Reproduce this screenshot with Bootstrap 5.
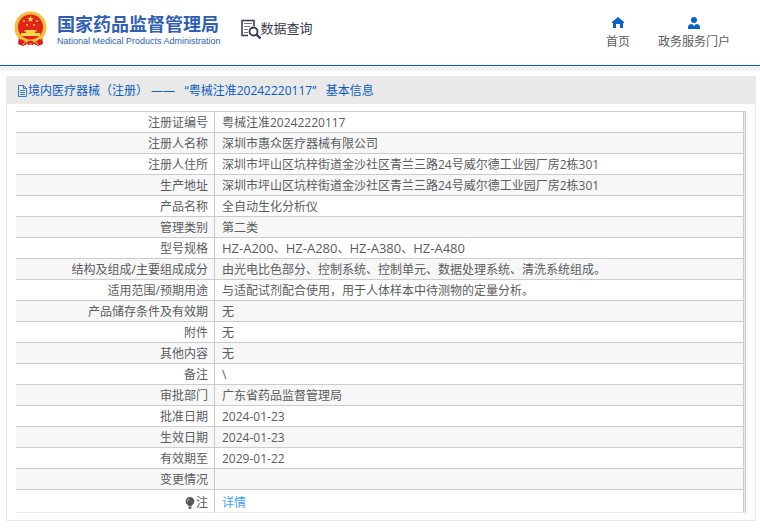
<!DOCTYPE html>
<html lang="zh-CN">
<head>
<meta charset="utf-8">
<meta name="viewport" content="width=device-width, initial-scale=1">
<title>国家药品监督管理局 数据查询</title>
<link href="https://cdn.jsdelivr.net/npm/bootstrap@5.3.0/dist/css/bootstrap.min.css" rel="stylesheet">
<style>
  body { font-family: "Open Sans", "Noto Sans CJK SC", sans-serif; font-size: 12px; line-height: 20px; color: #5a5c60; background: #fff; }
  .site-header { height: 66px; border-bottom: 1px solid #0b5fb8; }
  .hatch { height: 4px; background: linear-gradient(135deg, #e8e8e8 25%, #fff 25% 50%, #e8e8e8 50% 75%, #fff 75%) 0 0 / 4px 4px; }
  .brand { color: #2f5fb3; padding-left: 14px; gap: 10px; }
  .brand-cn { font-family: "Noto Sans CJK SC", sans-serif; font-size: 18px; line-height: 24px; font-weight: 700; }
  .brand-en { font-family: "Liberation Sans", sans-serif; font-size: 9px; line-height: 12px; }
  .query { font-family: "Noto Sans CJK SC", sans-serif; font-size: 13px; line-height: 20px; color: #3a3c46; margin-left: 20px; padding-bottom: 10px; }
  .query svg { margin-top: 4px; }
  .site-nav { gap: 28px; padding: 4px 30px 0 0; }
  .site-nav a { color: #5a5c60; }
  .site-nav svg { margin-bottom: 3px; }
  .panel { margin: 6px 4px 0 6px; border: 1px solid #e9e9e9; }
  .panel-title { background: #e9e9e9; color: #0a5cc0; font-size: 12px; line-height: 27px; padding-left: 10px; }
  .panel-body { padding: 7px 9px; }
  .frame { border: 1px solid #ccc; border-left: 0; border-bottom: 0; padding-right: 1px; background: #e9eaf3; }
  .detail { color: inherit; table-layout: fixed; border-collapse: separate; border-spacing: 0; }
  .detail > tbody > tr > * { height: 21px; padding: 2px 6px 0 7px; line-height: 18px; color: inherit; font-weight: 400; background: #fff; border: 0 solid #ccc; border-width: 0 1px 1px 0; box-shadow: none; }
  .detail > tbody > tr:nth-child(even) > * { background: #f7f7f7; }
  .detail > tbody > tr > th { width: 199px; }
  .detail > tbody > tr:last-child > * { height: 23px; padding-top: 4px; background: #fff; border-bottom-color: #e9eaf3; }
  .detail a { color: #409eff; }
  .model { font-size: 13px; line-height: 1; }
</style>
<script src="https://cdn.jsdelivr.net/npm/bootstrap@5.3.0/dist/js/bootstrap.bundle.min.js"></script>
</head>
<body>
<header class="site-header d-flex align-items-center">
  <a class="brand d-flex align-items-center text-decoration-none" href="#">
    <svg class="mb-2" width="33" height="36" viewBox="0 0 33 36" aria-hidden="true">
      <path d="M5 25L4 33l5 2 4-2 3.500 1 3.500-1 4 2 5-2-1-8z" fill="#d81e1e"/>
      <circle cx="16.500" cy="16.500" r="16" fill="#eeb92e"/>
      <circle cx="16.500" cy="16.500" r="14.500" fill="none" stroke="#f8d56a" stroke-width="1" stroke-dasharray="2 1"/>
      <circle cx="16.500" cy="16" r="12.500" fill="#e2231a"/>
      <path d="M16.500 5l.9 2.100 2.300.2-1.700 1.500.5 2.200-2-1.200-2 1.200.5-2.200-1.700-1.500 2.300-.2z" fill="#ffd84a"/>
      <g fill="#ffd84a"><circle cx="10" cy="10" r="1"/><circle cx="23" cy="10" r="1"/><circle cx="13" cy="14" r="1"/><circle cx="20" cy="14" r="1"/>
      <path d="M11 19h11l1 1.500h-2V22h5v3H7v-3h5v-1.500h-2z"/></g>
      <path d="M6 27q10.500 4 21 0l-2 4H8z" fill="#f2c23b"/>
      <path d="M13 31q3.500-3 7 0l-1 3h-5zM7 28l5 3-1 3-5-2zM26 28l-5 3 1 3 5-2z" fill="#dc211b"/>
      <path d="M9 34l2-3M24 34l-2-3M15 33h3" stroke="#f4c63f"/>
    </svg>
    <span class="d-flex flex-column mb-2">
      <span class="brand-cn">国家药品监督管理局</span>
      <span class="brand-en">National Medical Products Administration</span>
    </span>
  </a>
  <div class="query d-flex align-items-center">
    <svg width="20" height="21" viewBox="0 0 20 21" fill="none" stroke="#34354a" aria-hidden="true">
      <path d="M7 16.500H1V1.500h12V7" stroke-width="1.500"/>
      <path d="M3 4.500h8M3 7.500h6M3 10.500h4M3 13.500h4" stroke="#77788a"/>
      <circle cx="12.500" cy="12.500" r="4" stroke-width="1.800"/>
      <path d="M15.500 15.500l4 4" stroke-width="2.400"/>
    </svg>
    <span>数据查询</span>
  </div>
  <nav class="site-nav d-flex ms-auto">
    <a class="d-flex flex-column align-items-center text-decoration-none" href="#">
      <svg width="12" height="12" viewBox="0 0 12 12" aria-hidden="true"><path d="M6 0l6 5v1h-1v5H8V7H4v4H1V6H0V5z" fill="#0b62c4"/></svg>
      <span>首页</span>
    </a>
    <a class="d-flex flex-column align-items-center text-decoration-none" href="#">
      <svg width="12" height="12" viewBox="0 0 12 12" aria-hidden="true"><circle cx="6" cy="3" r="3" fill="#0b62c4"/><path d="M0 12V10q0-3 4-3l2 2 2-2q4 0 4 3v2z" fill="#0b62c4"/></svg>
      <span>政务服务门户</span>
    </a>
  </nav>
</header>
<div class="hatch"></div>
<main class="panel">
  <h1 class="panel-title d-flex align-items-center mb-0 fw-normal">
    <svg width="11" height="12" viewBox="0 0 11 12" fill="none" stroke="#0a5cc0" aria-hidden="true"><path d="M1.500.5h5l3 3v8h-8zM6.500.5v3h3M3 5.500h5M3 7.500h5M3 9.500h5" stroke-width=".8"/></svg>
    <span>境内医疗器械（注册） —— &nbsp;&nbsp;“粤械注准20242220117” &nbsp;&nbsp;基本信息</span>
  </h1>
  <div class="panel-body">
    <div class="frame">
      <table class="table detail mb-0">
        <tbody>
          <tr><th class="text-end" scope="row">注册证编号</th><td>粤械注准20242220117</td></tr>
          <tr><th class="text-end" scope="row">注册人名称</th><td>深圳市惠众医疗器械有限公司</td></tr>
          <tr><th class="text-end" scope="row">注册人住所</th><td>深圳市坪山区坑梓街道金沙社区青兰三路24号威尔德工业园厂房2栋301</td></tr>
          <tr><th class="text-end" scope="row">生产地址</th><td>深圳市坪山区坑梓街道金沙社区青兰三路24号威尔德工业园厂房2栋301</td></tr>
          <tr><th class="text-end" scope="row">产品名称</th><td>全自动生化分析仪</td></tr>
          <tr><th class="text-end" scope="row">管理类别</th><td>第二类</td></tr>
          <tr><th class="text-end" scope="row">型号规格</th><td><span class="model">HZ-A200</span>、<span class="model">HZ-A280</span>、<span class="model">HZ-A380</span>、<span class="model">HZ-A480</span></td></tr>
          <tr><th class="text-end" scope="row">结构及组成/主要组成成分</th><td>由光电比色部分、控制系统、控制单元、数据处理系统、清洗系统组成。</td></tr>
          <tr><th class="text-end" scope="row">适用范围/预期用途</th><td>与适配试剂配合使用，用于人体样本中待测物的定量分析。</td></tr>
          <tr><th class="text-end" scope="row">产品储存条件及有效期</th><td>无</td></tr>
          <tr><th class="text-end" scope="row">附件</th><td>无</td></tr>
          <tr><th class="text-end" scope="row">其他内容</th><td>无</td></tr>
          <tr><th class="text-end" scope="row">备注</th><td>\</td></tr>
          <tr><th class="text-end" scope="row">审批部门</th><td>广东省药品监督管理局</td></tr>
          <tr><th class="text-end" scope="row">批准日期</th><td>2024-01-23</td></tr>
          <tr><th class="text-end" scope="row">生效日期</th><td>2024-01-23</td></tr>
          <tr><th class="text-end" scope="row">有效期至</th><td>2029-01-22</td></tr>
          <tr><th class="text-end" scope="row">变更情况</th><td></td></tr>
          <tr><th scope="row"><span class="d-flex align-items-center justify-content-end"><svg width="11" height="12" viewBox="0 0 11 12" aria-hidden="true"><path d="M5 0a4.300 4.300 0 0 1 2.500 7.800L6.500 9h-3L2.500 7.800A4.300 4.300 0 0 1 5 0zM3.500 9.500h3V11l-1 1h-1l-1-1z" fill="#55575b"/><path d="M2.500 4.500q0-2 2-2.500" fill="none" stroke="#ddd" stroke-width=".8"/></svg>注</span></th><td><a class="text-decoration-none" href="#">详情</a></td></tr>
        </tbody>
      </table>
    </div>
  </div>
</main>
</body>
</html>
